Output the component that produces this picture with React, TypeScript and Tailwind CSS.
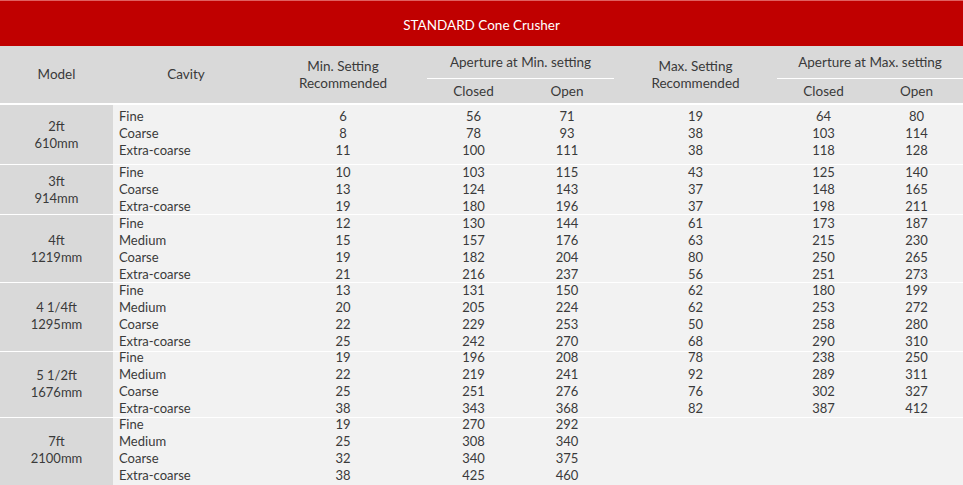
import React from "react";

type Row = [string, string, string, string, string, string, string];
type Group = { model: [string, string]; h: string; off: string; mo: string; rows: Row[] };

const groups: Group[] = [
  {
    model: ["2ft", "610mm"],
    h: "h-[59px]",
    off: "mt-[3px]",
    mo: "pb-0",
    rows: [
      ["Fine", "6", "56", "71", "19", "64", "80"],
      ["Coarse", "8", "78", "93", "38", "103", "114"],
      ["Extra-coarse", "11", "100", "111", "38", "118", "128"],
    ],
  },
  {
    model: ["3ft", "914mm"],
    h: "h-[50px] border-t border-white",
    off: "-mt-[1px]",
    mo: "pb-0",
    rows: [
      ["Fine", "10", "103", "115", "43", "125", "140"],
      ["Coarse", "13", "124", "143", "37", "148", "165"],
      ["Extra-coarse", "19", "180", "196", "37", "198", "211"],
    ],
  },
  {
    model: ["4ft", "1219mm"],
    h: "h-[68px] border-t border-white",
    off: "mt-0",
    mo: "pb-0",
    rows: [
      ["Fine", "12", "130", "144", "61", "173", "187"],
      ["Medium", "15", "157", "176", "63", "215", "230"],
      ["Coarse", "19", "182", "204", "80", "250", "265"],
      ["Extra-coarse", "21", "216", "237", "56", "251", "273"],
    ],
  },
  {
    model: ["4 1/4ft", "1295mm"],
    h: "h-[69px] border-t border-white",
    off: "-mt-[1.5px]",
    mo: "pb-[2px]",
    rows: [
      ["Fine", "13", "131", "150", "62", "180", "199"],
      ["Medium", "20", "205", "224", "62", "253", "272"],
      ["Coarse", "22", "229", "253", "50", "258", "280"],
      ["Extra-coarse", "25", "242", "270", "68", "290", "310"],
    ],
  },
  {
    model: ["5 1/2ft", "1676mm"],
    h: "h-[66px] border-t border-white",
    off: "-mt-[3.5px]",
    mo: "pb-[1px]",
    rows: [
      ["Fine", "19", "196", "208", "78", "238", "250"],
      ["Medium", "22", "219", "241", "92", "289", "311"],
      ["Coarse", "25", "251", "276", "76", "302", "327"],
      ["Extra-coarse", "38", "343", "368", "82", "387", "412"],
    ],
  },
  {
    model: ["7ft", "2100mm"],
    h: "h-[70px] border-t border-white",
    off: "-mt-[2.5px]",
    mo: "pb-[6px]",
    rows: [
      ["Fine", "19", "270", "292", "", "", ""],
      ["Medium", "25", "308", "340", "", "", ""],
      ["Coarse", "32", "340", "375", "", "", ""],
      ["Extra-coarse", "38", "425", "460", "", "", ""],
    ],
  },
];

const cols = "grid grid-cols-[113px_146px_168px_93px_94px_163px_93px_93px]";

export default function App() {
  return (
    <div
      className="w-[963px] h-[485px] overflow-hidden bg-[#f2f2f2] text-[#3a3a3a]"
      style={{ fontFamily: "Lato, 'Open Sans', sans-serif" }}
    >
      <div className="h-[46px] bg-[#c00000] border-t border-[#e06060] flex items-center justify-center text-white text-[13.5px] pt-[3px]">
        STANDARD Cone Crusher
      </div>
      <div className={`${cols} h-[59px] bg-[#d9d9d9] border-b-2 border-white text-[13.5px] leading-[17px]`}>
        <div className="flex items-center justify-center">Model</div>
        <div className="flex items-center justify-center">Cavity</div>
        <div className="flex flex-col items-center justify-center">
          <span>Min. Setting</span>
          <span>Recommended</span>
        </div>
        <div className="col-span-2 flex flex-col">
          <div className="h-[33px] border-b border-white flex items-center justify-center">Aperture at Min. setting</div>
          <div className="flex-1 grid grid-cols-[93px_94px]">
            <div className="flex items-center justify-center">Closed</div>
            <div className="flex items-center justify-center">Open</div>
          </div>
        </div>
        <div className="flex flex-col items-center justify-center">
          <span>Max. Setting</span>
          <span>Recommended</span>
        </div>
        <div className="col-span-2 flex flex-col">
          <div className="h-[33px] border-b border-white flex items-center justify-center">Aperture at Max. setting</div>
          <div className="flex-1 grid grid-cols-[93px_93px]">
            <div className="flex items-center justify-center">Closed</div>
            <div className="flex items-center justify-center">Open</div>
          </div>
        </div>
      </div>
      {groups.map((g, gi) => (
        <div key={gi} className={`${cols} grid-rows-[minmax(0,1fr)] ${g.h} text-[13px] leading-[17px]`}>
          <div className={`bg-[#d9d9d9] min-h-0 h-full flex flex-col items-center justify-center ${g.mo}`}>
            <span>{g.model[0]}</span>
            <span>{g.model[1]}</span>
          </div>
          {[0, 1, 2, 3, 4, 5, 6].map((ci) => (
            <div key={ci} className="min-h-0 h-full">
              <div className={`flex flex-col ${g.off} ${ci === 0 ? "items-start pl-[6px]" : "items-center"}`}>
                {g.rows.map((r, ri) => (
                  <span key={ri} className="h-[17px] shrink-0">
                    {r[ci]}
                  </span>
                ))}
              </div>
            </div>
          ))}
        </div>
      ))}
    </div>
  );
}
